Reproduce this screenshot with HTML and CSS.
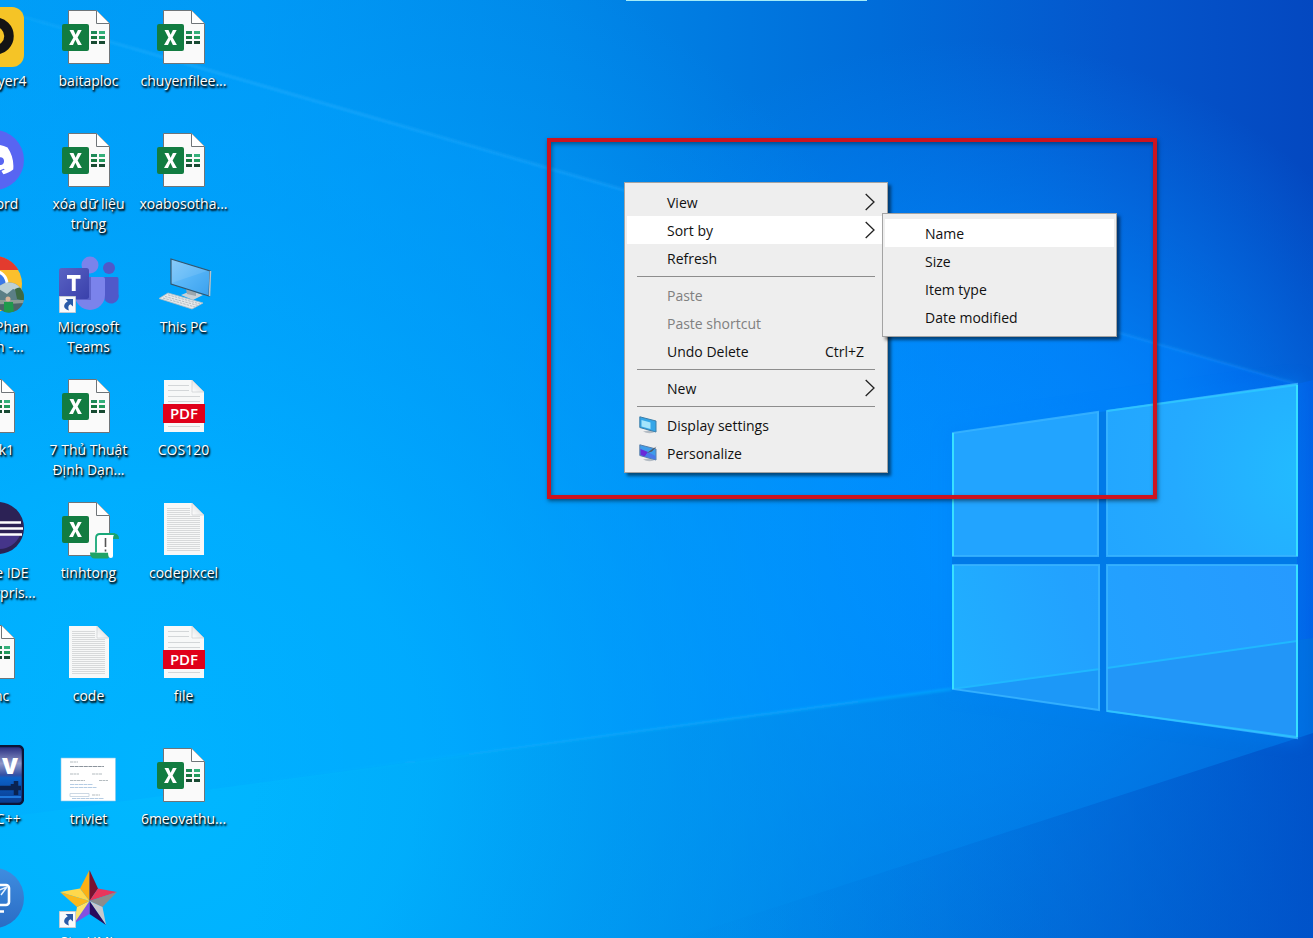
FILE: index.html
```html
<!DOCTYPE html>
<html lang="vi">
<head>
<meta charset="utf-8">
<meta name="viewport" content="width=device-width, initial-scale=1">
<title>Desktop</title>
<link rel="stylesheet" href="styles.css">
</head>
<body>
<svg class="defs" aria-hidden="true">
  <defs>
    <linearGradient id="paper-fold" x1="0" y1="1" x2="1" y2="0"><stop offset="0" stop-color="#fff"/><stop offset="1" stop-color="#cfd3d6"/></linearGradient>
    <linearGradient id="teams-tile" x1="0" y1="0" x2="1" y2="1"><stop offset="0" stop-color="#5a62c3"/><stop offset="1" stop-color="#3940ab"/></linearGradient>
    <linearGradient id="screen" x1="0" y1="0" x2="1" y2="1"><stop offset="0" stop-color="#7cc6fa"/><stop offset="0.5" stop-color="#55b4f7"/><stop offset="1" stop-color="#3aa0ee"/></linearGradient>
    <linearGradient id="dev-tile" x1="0" y1="0" x2="0" y2="1"><stop offset="0" stop-color="#22287c"/><stop offset="0.3" stop-color="#8d96c8"/><stop offset="0.5" stop-color="#3450a4"/><stop offset="0.55" stop-color="#0b62c8"/><stop offset="1" stop-color="#0a3a8c"/></linearGradient>
    <linearGradient id="viewer-tile" x1="0" y1="0" x2="0" y2="1"><stop offset="0" stop-color="#3f8de0"/><stop offset="1" stop-color="#2a6cc4"/></linearGradient>
    <symbol id="sheet" viewBox="0 0 61 60">
      <path d="M10.5 3.5H38.5L51.5 16.5V56.5H10.5Z" fill="#fafafa" stroke="#6f7478"/>
      <path d="M38.5 3.5V16.5H51.5" fill="#fff" stroke="#6f7478"/>
      <rect x="4" y="17" width="27" height="27" rx="2" fill="#127c41"/>
      <path d="M33 24h6v3h-6z" fill="#1f8a58"/><path d="M41 24h6v3h-6z" fill="#35b07a"/>
      <path d="M33 29h6v3h-6z" fill="#15783f"/><path d="M41 29h6v3h-6z" fill="#219a5c"/>
      <path d="M33 34h6v3h-6zM41 34h6v3h-6z" fill="#184a32"/>
      <path d="M11.5 23H15.5L17.6 27.8L19.9 23H23.7L19.6 30.4L23.9 38H19.9L17.4 32.8L15 38H11L15.4 30.4Z" fill="#fff"/>
    </symbol>
    <symbol id="page" viewBox="0 0 61 60">
      <path d="M11 4H39L51 16V56H11Z" fill="#f7f8f8"/>
      <path d="M39 4L51 16H39Z" fill="url(#paper-fold)" stroke="#c4c8cb" stroke-width=".6"/>
    </symbol>
    <symbol id="text-page" viewBox="0 0 61 60">
      <use href="#page"/>
      <path d="M14 9.500H37M14 11.500H37M14 13.500H37M14 15.500H37M14 17.500H47M14 19.500H47M14 21.500H47M14 23.500H47M14 25.500H47M14 27.500H47M14 29.500H47M14 31.500H47M14 33.500H47M14 35.500H47M14 37.500H47M14 39.500H47M14 41.500H47M14 43.500H47M14 45.500H47M14 47.500H47M14 49.500H47M14 51.500H47" stroke="#d3d5d6" stroke-width=".9"/>
    </symbol>
    <symbol id="pdf" viewBox="0 0 61 60">
      <use href="#page"/>
      <path d="M15 9.500H36M15 14.500H36M15 20.500H47M15 25.500H47M15 50.500H47" stroke="#d3d6d8"/>
      <path d="M10 28H52V47H10Z" fill="#e0001a"/>
      <text x="31" y="43" class="pdf-text">PDF</text>
    </symbol>
    <symbol id="shortcut" viewBox="0 0 17 17">
      <path d="M.5 .5H16.500V16.500H.5Z" fill="#f8fafc" stroke="#c4ccd4"/>
      <path d="M6.500 3H14V10.500L11.500 8.200C9 9.500 9 11.500 10 14.500C4 13 3.500 8.500 8.800 5.300Z" fill="#2a5ba8"/>
    </symbol>
    <symbol id="chevron" viewBox="0 0 10 18"><path d="M.7 1L9 9L.7 17" fill="none" stroke="#222" stroke-width="1.300"/></symbol>
  </defs>
</svg>

<main class="desktop">
  <svg class="wallpaper" viewBox="0 0 1313 938" preserveAspectRatio="xMidYMid slice" aria-hidden="true">
    <defs>
      <linearGradient id="w-base" x1="0" y1="0" x2="1" y2="0">
        <stop offset="0" stop-color="#009ef6"/><stop offset=".2" stop-color="#0098f4"/><stop offset=".42" stop-color="#0088e8"/><stop offset=".67" stop-color="#006cd9"/><stop offset=".85" stop-color="#0456cc"/><stop offset="1" stop-color="#0448c0"/>
      </linearGradient>
      <radialGradient id="w-left" gradientUnits="userSpaceOnUse" cx="150" cy="760" r="900">
        <stop offset="0" stop-color="#00b8ff"/><stop offset=".3" stop-color="#00b2ff" stop-opacity=".95"/><stop offset=".6" stop-color="#00a4fc" stop-opacity=".6"/><stop offset="1" stop-color="#0098fc" stop-opacity="0"/>
      </radialGradient>
      <radialGradient id="w-mid" gradientUnits="userSpaceOnUse" cx="970" cy="540" r="500">
        <stop offset="0" stop-color="#008cff"/><stop offset=".45" stop-color="#008aff" stop-opacity=".75"/><stop offset="1" stop-color="#0084f8" stop-opacity="0"/>
      </radialGradient>
      <linearGradient id="w-beam" gradientUnits="userSpaceOnUse" x1="0" y1="0" x2="1313" y2="0">
        <stop offset="0" stop-color="#00a8ff" stop-opacity=".25"/><stop offset=".6" stop-color="#0096ff" stop-opacity=".4"/><stop offset=".9" stop-color="#0080ff" stop-opacity=".5"/><stop offset="1" stop-color="#0064f4" stop-opacity=".5"/>
      </linearGradient>
      <linearGradient id="w-low" gradientUnits="userSpaceOnUse" x1="250" y1="0" x2="1313" y2="0">
        <stop offset="0" stop-color="#0098e8" stop-opacity="0"/><stop offset=".45" stop-color="#0090e8" stop-opacity=".35"/><stop offset="1" stop-color="#0070e0" stop-opacity=".75"/>
      </linearGradient>
      <linearGradient id="w-corner" gradientUnits="userSpaceOnUse" x1="740" y1="0" x2="1313" y2="0">
        <stop offset="0" stop-color="#0074dc" stop-opacity=".05"/><stop offset=".5" stop-color="#0060d0" stop-opacity=".35"/><stop offset="1" stop-color="#004cc4" stop-opacity=".75"/>
      </linearGradient>
      <linearGradient id="w-ray" gradientUnits="userSpaceOnUse" x1="0" y1="0" x2="1313" y2="0">
        <stop offset="0" stop-color="#3cc0ff" stop-opacity=".1"/><stop offset=".15" stop-color="#30b4ff" stop-opacity=".4"/><stop offset="1" stop-color="#1ca0ff" stop-opacity=".25"/>
      </linearGradient>
      <linearGradient id="w-ray-low" gradientUnits="userSpaceOnUse" x1="200" y1="0" x2="960" y2="0">
        <stop offset="0" stop-color="#20c0ff" stop-opacity="0"/><stop offset="1" stop-color="#08a8ff" stop-opacity=".7"/>
      </linearGradient>
      <radialGradient id="w-pane" gradientUnits="userSpaceOnUse" cx="1310" cy="470" r="340">
        <stop offset="0" stop-color="#22bcff"/><stop offset=".4" stop-color="#24aaff"/><stop offset="1" stop-color="#20a0ff"/>
      </radialGradient>
      <linearGradient id="w-pane-low" gradientUnits="userSpaceOnUse" x1="952" y1="690" x2="1297" y2="580">
        <stop offset="0" stop-color="#20b0ff"/><stop offset=".4" stop-color="#22a2ff"/><stop offset="1" stop-color="#269aff"/>
      </linearGradient>
      <filter id="w-soft" x="-5%" y="-5%" width="110%" height="110%"><feGaussianBlur stdDeviation="1.200"/></filter>
      <filter id="w-glow" x="-20%" y="-20%" width="140%" height="140%"><feGaussianBlur stdDeviation="8"/></filter>
    </defs>
    <path d="M0 0H1313V938H0Z" fill="url(#w-base)"/>
    <path d="M0 0H1313V938H0Z" fill="url(#w-mid)"/>
    <path d="M0 0H1313V938H0Z" fill="url(#w-left)"/>
    <path d="M0 10L1297 384L1313 380V638L952 689L0 818Z" fill="url(#w-beam)"/>
    <path d="M200 790L952 689L1313 638V938H200Z" fill="url(#w-low)"/>
    <path d="M1313 733L680 938H1313Z" fill="url(#w-corner)"/>
    <path d="M0 10L1297 384" stroke="url(#w-ray)" stroke-width="3" filter="url(#w-soft)"/>
    <path d="M100 804L952 689" stroke="url(#w-ray-low)" stroke-width="3" filter="url(#w-soft)"/>
    <path d="M952 433L1297 384V738L952 689Z" fill="none" stroke="#0880f8" stroke-width="8" opacity=".5" filter="url(#w-glow)"/>
    <path d="M952 433L1297 384V738L952 689Z" fill="#007ae8"/>
    <path d="M952 433L1099 412V556H952Z" fill="#22a4ff"/>
    <path d="M1106 411L1297 384V556H1107Z" fill="url(#w-pane)"/>
    <path d="M952 565H1100V710L952 689Z" fill="url(#w-pane-low)"/>
    <path d="M1107 565H1297V738L1107 711Z" fill="url(#w-pane-low)"/>
    <path d="M952 689L1100 669V710Z" fill="#1c98f8"/>
    <path d="M1107 668L1297 641V738L1107 711Z" fill="#2296f8"/>
    <path d="M952 689L1100 669M1107 668L1297 641" stroke="#20b8ff" stroke-width="2"/>
    <path d="M953 433L1098 412V556H953ZM1107 411L1297 384V556H1107ZM953 565H1099V710L953 689ZM1107 565H1297V738L1107 711Z" fill="none" stroke="#38b4ff" stroke-width="2" opacity=".85"/>
    <path d="M1107 411L1297 385M1297 737L1107 711" fill="none" stroke="#2cd0ff" stroke-width="2" opacity=".6"/>
    <path d="M953 433V556M953 565V689M1297 385V556M1297 565V737" fill="none" stroke="#38e0ff" stroke-width="2"/>
  </svg>

  <div class="top-edge" aria-hidden="true"></div>

  <section class="icons" aria-label="Desktop icons">
    <button class="icon" type="button">
      <svg class="art" viewBox="0 0 61 60"><rect x="1" width="60" height="60" rx="12" fill="#f5c426"/><circle cx="32" cy="29" r="14" fill="none" stroke="#141414" stroke-width="9.500"/></svg>
      <span class="label">LDPlayer4</span>
    </button>
    <button class="icon" type="button">
      <svg class="art" viewBox="0 0 61 60"><circle cx="31" cy="30" r="30" fill="#5865f2"/><path transform="translate(12 10.500) scale(1.600)" fill="#fff" d="M20.317 4.370a19.800 19.800 0 00-4.885-1.515.074.074 0 00-.079.037c-.211.375-.445.865-.608 1.250-1.845-.276-3.680-.276-5.487 0-.164-.393-.406-.874-.618-1.250a.077.077 0 00-.079-.037 19.700 19.700 0 00-4.885 1.515.07.07 0 00-.032.028C.533 9.046-.319 13.580.099 18.058a.082.082 0 00.031.056c2.053 1.508 4.041 2.423 5.993 3.029a.078.078 0 00.084-.028c.462-.630.873-1.295 1.226-1.994a.076.076 0 00-.042-.106c-.653-.248-1.274-.550-1.872-.892a.077.077 0 01-.008-.128c.126-.094.252-.192.372-.291a.074.074 0 01.078-.011c3.928 1.793 8.180 1.793 12.061 0a.074.074 0 01.079.010c.120.099.246.198.373.292a.077.077 0 01-.007.128 12.300 12.300 0 01-1.873.891.077.077 0 00-.041.107c.360.698.772 1.363 1.225 1.993a.076.076 0 00.084.029c1.961-.607 3.950-1.522 6.002-3.029a.077.077 0 00.031-.055c.500-5.177-.838-9.674-3.549-13.660a.061.061 0 00-.031-.029zM8.020 15.331c-1.183 0-2.157-1.086-2.157-2.419s.956-2.419 2.157-2.419c1.211 0 2.176 1.095 2.157 2.419 0 1.333-.956 2.419-2.157 2.419zm7.975 0c-1.183 0-2.157-1.086-2.157-2.419s.955-2.419 2.157-2.419c1.211 0 2.176 1.095 2.157 2.419 0 1.333-.946 2.419-2.157 2.419Z"/></svg>
      <span class="label">Discord</span>
    </button>
    <button class="icon" type="button">
      <svg class="art" viewBox="0 0 61 60">
        <circle cx="31" cy="31" r="28" fill="#fbc02d"/>
        <path d="M7 17A28 28 0 0 1 55.500 17H31Z" fill="#e33b2e"/><path d="M7 17L31 45L28 59A28 28 0 0 1 7 17Z" fill="#2ba24c"/>
        <circle cx="31" cy="31" r="14.500" fill="#fff"/><circle cx="31" cy="31" r="11.500" fill="#3b78e7"/>
        <clipPath id="avatar"><circle cx="46" cy="44.500" r="15"/></clipPath>
        <g clip-path="url(#avatar)"><path d="M30 28H62V60H30Z" fill="#5b7f86"/><path d="M30 28H62V39L50 36L44 41L36 36L30 41Z" fill="#bcd0d4"/><path d="M52 36Q58 32 62 38V48L54 46Z" fill="#3c6a44"/><path d="M30 47H62V51H30Z" fill="#8c9c94"/><path d="M30 52L62 50V60H30Z" fill="#4c6468"/><circle cx="45" cy="46" r="2.500" fill="#d8b49a"/><path d="M41 49H50L51 60H41Z" fill="#1f9a4c"/></g>
      </svg>
      <span class="label">Tuan Phan<br>Thanh -...</span>
    </button>
    <button class="icon" type="button"><svg class="art"><use href="#sheet"/></svg><span class="label">Book1</span></button>
    <button class="icon" type="button">
      <svg class="art" viewBox="0 0 61 60"><circle cx="35" cy="29" r="26" fill="#2c2255"/><path d="M36 50A22 22 0 0 0 57 36H20Q26 48 36 50Z" fill="#45358a"/><path d="M12 23.500H58M11 29.500H60M12 35.500H59" stroke="#fff" stroke-width="2.600"/></svg>
      <span class="label">Eclipse IDE<br>&amp; Enterpris...</span>
    </button>
    <button class="icon" type="button"><svg class="art"><use href="#sheet"/></svg><span class="label">danc</span></button>
    <button class="icon" type="button">
      <svg class="art" viewBox="0 0 61 60"><rect x="2" y="1" width="58" height="58" rx="5" fill="url(#dev-tile)" stroke="#0c1438" stroke-width="2.500"/><path d="M4 43H50V39M41 43H58M53 36V50" stroke="#0a2350" stroke-width="4.500" fill="none"/><path d="M4 52H58" stroke="#1e78dc" stroke-width="2"/><text x="55" y="29" class="dev-text">V</text></svg>
      <span class="label">Dev-C++</span>
    </button>
    <button class="icon" type="button" aria-label="Remote viewer">
      <svg class="art" viewBox="0 0 61 60"><circle cx="31" cy="30" r="30" fill="url(#viewer-tile)"/><rect x="14" y="17" width="32" height="20" rx="3" fill="none" stroke="#fff" stroke-width="2.600"/><path d="M24 43.500H41" stroke="#fff" stroke-width="2.500"/><path d="M34 23L44 19L38 27" fill="none" stroke="#e6f2ff" stroke-width="1.500"/></svg>
    </button>

    <button class="icon" type="button"><svg class="art"><use href="#sheet"/></svg><span class="label">baitaploc</span></button>
    <button class="icon" type="button"><svg class="art"><use href="#sheet"/></svg><span class="label">xóa dữ liệu<br>trùng</span></button>
    <button class="icon" type="button">
      <svg class="art" viewBox="0 0 61 60">
        <circle cx="51" cy="15" r="6" fill="#5059c9"/><path d="M44 24H59Q60.500 24 60.500 26V41A7.500 7.500 0 0 1 46 45Z" fill="#5059c9"/>
        <circle cx="32" cy="12" r="8.500" fill="#7b83eb"/><path d="M18 24H45Q47 24 47 26V42A15 15 0 0 1 17 42Z" fill="#7b83eb"/>
        <path d="M18 24H33V47H17Z" fill="#4a50b4" opacity=".6"/>
        <rect x="1" y="15" width="30" height="31" rx="2.500" fill="url(#teams-tile)"/><path d="M9 22H22.500V25.800H17.700V38H13.800V25.800H9Z" fill="#fff"/>
        <use href="#shortcut" x="1" y="43" width="17" height="17"/>
      </svg>
      <span class="label">Microsoft<br>Teams</span>
    </button>
    <button class="icon" type="button"><svg class="art"><use href="#sheet"/></svg><span class="label">7 Thủ Thuật<br>Định Dạn...</span></button>
    <button class="icon" type="button">
      <svg class="art" viewBox="0 0 61 60">
        <path d="M10.500 3.500H38.500L51.500 16.500V56.500H10.500Z" fill="#fafafa" stroke="#6f7478"/>
        <path d="M38.500 3.500V16.500H51.500" fill="#fff" stroke="#6f7478"/>
        <rect x="4" y="17" width="27" height="27" rx="2" fill="#127c41"/>
        <path d="M11.500 23H15.500L17.600 27.800L19.900 23H23.700L19.600 30.400L23.900 38H19.900L17.400 32.800L15 38H11L15.400 30.400Z" fill="#fff"/>
        <path d="M32 53.500H51V57.500Q51 59.500 48 59.500H37Q32 59.500 32 53.500Z" fill="#21a366"/>
        <path d="M56 34.500Q61 34.500 61 40H54Z" fill="#18a070"/>
        <path d="M38 53.500V39Q38 35 42 35H57Q55 36 55 40V57Q55 59 53 59Q50 59 50 53.500Z" fill="#fff"/>
        <path d="M38 53.500V39Q38 35 42 35H57" fill="none" stroke="#18a878" stroke-width="1.800"/>
        <path d="M47.500 39V48M47.500 50.500V52.500" stroke="#555" stroke-width="1.600"/>
      </svg>
      <span class="label">tinhtong</span>
    </button>
    <button class="icon" type="button"><svg class="art"><use href="#text-page"/></svg><span class="label">code</span></button>
    <button class="icon" type="button">
      <svg class="art" viewBox="0 0 61 60"><path d="M3 13H57.500V56H3Z" fill="#fff" stroke="#8ac8e8" stroke-width=".6"/><path d="M12 17H20M12 29H21M34 29H44M12 35.500H27M41 35.500H50M34 50H42" stroke="#b4bcc0" stroke-width="1.200" stroke-dasharray="3 .5"/><path d="M12 21.500H46" stroke="#8c949c" stroke-width="1.200" stroke-dasharray="4 .6"/><path d="M12 39.500H35M12 42.500H39M14 53.500H46" stroke="#b4cce4" stroke-dasharray="4 .5"/><path d="M12 48.500H31V51.500H12Z" fill="none" stroke="#ccd8e4" /></svg>
      <span class="label">triviet</span>
    </button>
    <button class="icon" type="button">
      <svg class="art" viewBox="0 0 61 60">
        <path d="M31.500 2V33L22 20.500Z" fill="#fbb014"/><path d="M31.500 2L40 20.500L31.500 33Z" fill="#7a1230"/>
        <path d="M59 24L40 20.500L31.500 33Z" fill="#e8365c"/><path d="M59 24L44.500 39L31.500 33Z" fill="#8c8c8c"/>
        <path d="M48 57L44.500 39L31.500 33Z" fill="#c8c8cc"/><path d="M48 57L31.500 46V33Z" fill="#2a0a5c"/>
        <path d="M16 55.500L31.500 46V33Z" fill="#8450e0"/><path d="M16 55.500L19 39L31.500 33Z" fill="#fde06a"/>
        <path d="M2 24L19 39L31.500 33Z" fill="#fbb81c"/><path d="M2 24L22 20.500L31.500 33Z" fill="#ffd84c"/>
        <use href="#shortcut" x="1" y="43" width="17" height="17"/>
      </svg>
      <span class="label">StarUML</span>
    </button>

    <button class="icon" type="button"><svg class="art"><use href="#sheet"/></svg><span class="label">chuyenfilee...</span></button>
    <button class="icon" type="button"><svg class="art"><use href="#sheet"/></svg><span class="label">xoabosotha...</span></button>
    <button class="icon" type="button">
      <svg class="art" viewBox="0 0 61 60">
        <path d="M28 42L38 38L50 42L40 47Z" fill="#c8d0d6"/><path d="M33 36L43 39V43L34 41Z" fill="#9aa6ae"/>
        <path d="M18 6L57 18L56 43L18 31Z" fill="url(#screen)" stroke="#34566e" stroke-width="1.200"/><path d="M18.500 30L54 18V17.500L18.500 7Z" fill="#fff" opacity=".1"/><path d="M57.500 18L56.500 43" stroke="#b8c4cc" stroke-width="1.500"/>
        <path d="M6 45.500L15 40L50 50L39 56Z" fill="#e4e8ea" stroke="#b4bec4" stroke-width=".8"/><path d="M10 45L42 54M12 43.500L45 52.500M15 41.800L47 51" stroke="#b4bcc2" stroke-width="1" stroke-dasharray="2.500 1"/>
      </svg>
      <span class="label">This PC</span>
    </button>
    <button class="icon" type="button"><svg class="art"><use href="#pdf"/></svg><span class="label">COS120</span></button>
    <button class="icon" type="button"><svg class="art"><use href="#text-page"/></svg><span class="label">codepixcel</span></button>
    <button class="icon" type="button"><svg class="art"><use href="#pdf"/></svg><span class="label">file</span></button>
    <button class="icon" type="button"><svg class="art"><use href="#sheet"/></svg><span class="label">6meovathu...</span></button>
  </section>

  <div class="highlight-frame" aria-hidden="true"></div>

  <ul class="menu context-menu" role="menu" aria-label="Desktop menu">
    <li role="none"><button class="item" role="menuitem" type="button"><span>View</span><svg class="chevron"><use href="#chevron"/></svg></button></li>
    <li class="parent" role="none">
      <button class="item item-active" role="menuitem" type="button" aria-haspopup="true" aria-expanded="true"><span>Sort by</span><svg class="chevron"><use href="#chevron"/></svg></button>
      <ul class="menu submenu" role="menu" aria-label="Sort by">
        <li role="none"><button class="item item-active" role="menuitem" type="button"><span>Name</span></button></li>
        <li role="none"><button class="item" role="menuitem" type="button"><span>Size</span></button></li>
        <li role="none"><button class="item" role="menuitem" type="button"><span>Item type</span></button></li>
        <li role="none"><button class="item" role="menuitem" type="button"><span>Date modified</span></button></li>
      </ul>
    </li>
    <li role="none"><button class="item" role="menuitem" type="button"><span>Refresh</span></button></li>
    <li class="divider" role="separator"></li>
    <li role="none"><button class="item" role="menuitem" type="button" disabled><span>Paste</span></button></li>
    <li role="none"><button class="item" role="menuitem" type="button" disabled><span>Paste shortcut</span></button></li>
    <li role="none"><button class="item" role="menuitem" type="button"><span>Undo Delete</span><span class="keys">Ctrl+Z</span></button></li>
    <li class="divider" role="separator"></li>
    <li role="none"><button class="item" role="menuitem" type="button"><span>New</span><svg class="chevron"><use href="#chevron"/></svg></button></li>
    <li class="divider" role="separator"></li>
    <li role="none"><button class="item item-pictured" role="menuitem" type="button">
      <svg class="glyph" viewBox="0 0 18 18"><path d="M4 15.500Q9 18.500 15 16.500L12 14Z" fill="#b4bcc4"/><path d="M.8 .8L17 5V16L.8 11.500Z" fill="#35a6e8" stroke="#3c7ea8"/><path d="M2.500 4L11.500 6.500V13L2.500 10.500Z" fill="#a4e4fc"/></svg>
      <span>Display settings</span></button></li>
    <li role="none"><button class="item item-pictured" role="menuitem" type="button">
      <svg class="glyph" viewBox="0 0 18 18"><path d="M4 15.500Q9 18.500 15 16.500L12 14Z" fill="#b4bcc4"/><path d="M.8 .8L17 5V16L.8 11.500Z" fill="#3f9cea" stroke="#5a7ea8"/><path d="M1.500 5L9 8L6 12.500L1.500 11Z" fill="#6a2ad8"/><path d="M9 8L16.500 12V15.500L6 12.500Z" fill="#4a78e8"/><path d="M8 9L12 6L17.500 2.500L13 7.500Z" fill="#505860"/></svg>
      <span>Personalize</span></button></li>
  </ul>
</main>
</body>
</html>
```
FILE: styles.css
```css
* { box-sizing: border-box; }

body {
  margin: 0;
  font-family: "Open Sans", "Noto Sans", sans-serif;
  font-size: 14px;
  line-height: 20px;
}

button {
  margin: 0;
  padding: 0;
  border: 0;
  background: none;
  color: inherit;
  font: inherit;
}

.defs { position: absolute; width: 0; height: 0; }

.desktop {
  position: relative;
  height: 100vh;
  overflow: hidden;
  background: #0090f8;
}

.wallpaper { position: absolute; inset: 0; width: 100%; height: 100%; }

.top-edge {
  position: absolute;
  top: 0;
  left: 626px;
  width: 241px;
  height: 1px;
  background: #a4ecf8;
}

/* The leftmost column hangs over the screen edge. */
.icons {
  position: relative;
  display: grid;
  grid-auto-flow: column;
  grid-template-rows: repeat(8, 123px);
  grid-auto-columns: 95px;
  margin-left: -54px;
  padding-top: 7px;
}

.icon {
  display: flex;
  flex-direction: column;
  align-items: center;
  gap: 4px;
  color: #fff;
  text-align: center;
  white-space: nowrap;
  text-shadow: 1px 1px 2px #000, 1px 2px 2px #000;
}

.art { width: 61px; height: 60px; flex: none; text-shadow: none; }

.pdf-text { font-size: 15px; font-weight: 600; fill: #fff; text-anchor: middle; }
.dev-text { font-size: 23px; font-weight: 800; fill: #fff; text-anchor: end; }

.highlight-frame {
  position: absolute;
  top: 138px;
  left: 547px;
  width: 610px;
  height: 361px;
  border: 4px solid #cc1420;
  box-shadow: 1px 2px 4px rgba(0, 0, 0, .5), inset 1px 2px 4px rgba(0, 0, 0, .4);
}

.menu {
  position: absolute;
  margin: 0;
  padding: 5px 2px;
  border: 1px solid #a3a3a3;
  background: #eee;
  color: #111;
  list-style: none;
  box-shadow: 3px 3px 3px rgba(0, 0, 0, .5);
}

.context-menu { top: 182px; left: 624px; width: 264px; }

.parent { position: relative; }

.submenu { top: -3px; left: calc(100% - 3px); width: 235px; }

.item {
  display: flex;
  align-items: center;
  justify-content: space-between;
  width: 100%;
  height: 28px;
  padding: 0 10px 0 40px;
  text-align: left;
}

.item > span { padding-top: 2px; }
.item:disabled { color: #808080; }
.item-active { background: #fff; }
.item-pictured { justify-content: flex-start; gap: 10px; padding-left: 12px; }

.chevron { width: 10px; height: 18px; }
.keys { padding-right: 11px; }
.glyph { width: 18px; height: 18px; }

.divider { height: 9px; padding: 4px 10px; }
.divider::before { content: ""; display: block; height: 1px; background: #8d8d8d; }
```
